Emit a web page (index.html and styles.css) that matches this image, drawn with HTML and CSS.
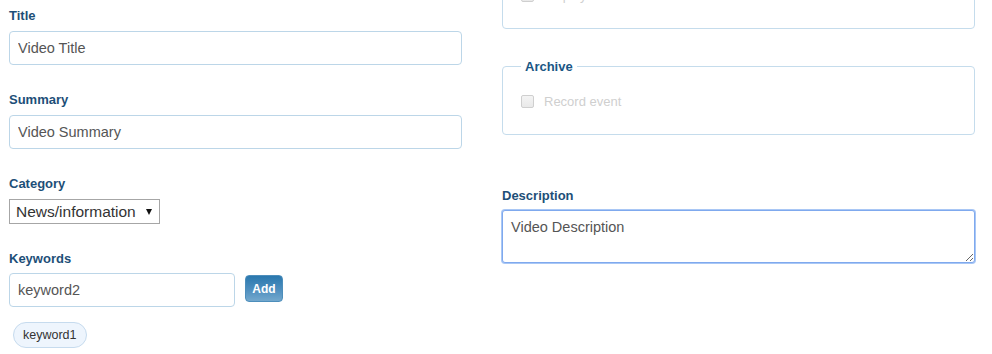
FILE: index.html
```html
<!DOCTYPE html>
<html>
<head>
<meta charset="utf-8">
<link rel="stylesheet" href="styles.css">
</head>
<body>
<div class="page">
  <div class="col col-left">
    <div class="group">
      <label class="lbl">Title</label>
      <input class="field" type="text" value="Video Title">
    </div>
    <div class="group">
      <label class="lbl">Summary</label>
      <input class="field" type="text" value="Video Summary">
    </div>
    <div class="group">
      <label class="lbl">Category</label>
      <div class="select-wrap">
        <select class="select"><option>News/information</option></select>
      </div>
    </div>
    <div class="group">
      <label class="lbl">Keywords</label>
      <div class="kw-row">
        <input class="field kw-field" type="text" value="keyword2">
        <button class="btn-add" type="button">Add</button>
      </div>
      <div class="tags">
        <span class="tag">keyword1</span>
      </div>
    </div>
  </div>
  <div class="col col-right">
    <fieldset class="fs">
      <legend class="legend">Live</legend>
      <div class="check-row">
        <input type="checkbox" class="chk" disabled>
        <span class="check-text">Display chat</span>
      </div>
    </fieldset>
    <fieldset class="fs fs-archive">
      <legend class="legend">Archive</legend>
      <div class="check-row">
        <input type="checkbox" class="chk" disabled>
        <span class="check-text">Record event</span>
      </div>
    </fieldset>
    <div class="group desc-group">
      <label class="lbl">Description</label>
      <textarea class="area focused" autofocus>Video Description</textarea>
    </div>
  </div>
</div>
</body>
</html>
```

FILE: styles.css
```css
html, body {
  margin: 0;
  padding: 0;
  background: #ffffff;
}
body {
  font-family: "Liberation Sans", Arial, sans-serif;
  color: #333;
  overflow: hidden;
}
.page {
  display: grid;
  grid-template-columns: 453px 473px;
  column-gap: 40px;
  padding-left: 9px;
  align-items: start;
}
.col {
  display: flex;
  flex-direction: column;
}
.col-left {
  padding-top: 8px;
}
.group {
  display: flex;
  flex-direction: column;
  align-items: flex-start;
  margin-bottom: 27px;
}
.lbl {
  display: block;
  font-size: 13px;
  line-height: 15px;
  font-weight: bold;
  color: #1d4f78;
  margin-bottom: 8px;
}
.field {
  box-sizing: border-box;
  width: 453px;
  height: 34px;
  border: 1px solid #bcd6e8;
  border-radius: 4px;
  padding: 0 8px;
  font-family: "Liberation Sans", Arial, sans-serif;
  font-size: 14.5px;
  color: #555;
  background: #fff;
  outline: none;
  margin: 0;
}
.select-wrap {
  position: relative;
  width: 151px;
  height: 25px;
}
.select-wrap::after {
  content: "";
  position: absolute;
  right: 8px;
  top: 10px;
  width: 0;
  height: 0;
  border-left: 3px solid transparent;
  border-right: 3px solid transparent;
  border-top: 6px solid #111;
  pointer-events: none;
}
.select {
  -webkit-appearance: none;
  appearance: none;
  box-sizing: border-box;
  width: 151px;
  height: 25px;
  border: 1px solid #a6a6a6;
  border-radius: 0;
  background: #fff;
  padding: 0 0 0 6px;
  margin: 0;
  font-family: "Liberation Sans", Arial, sans-serif;
  font-size: 15.5px;
  color: #333;
  outline: none;
}
.desc-group,
.group:last-child {
  margin-bottom: 0;
}
.kw-row {
  display: flex;
  align-items: flex-start;
  gap: 10px;
  margin-top: -1px;
}
.kw-field {
  width: 226px;
}
.btn-add {
  box-sizing: border-box;
  width: 38px;
  height: 27px;
  margin: 2px 0 0 0;
  padding: 0;
  border: 1px solid #4d8ebb;
  border-radius: 4px;
  background: linear-gradient(to bottom, #2a78ae 0%, #4f8fbf 55%, #73a8cd 100%);
  color: #fff;
  font-family: "Liberation Sans", Arial, sans-serif;
  font-weight: bold;
  font-size: 12px;
}
.tags {
  display: flex;
  margin-top: 15px;
  padding-left: 4px;
}
.tag {
  box-sizing: border-box;
  height: 26px;
  padding: 0 9px;
  border: 1px solid #c6dbee;
  border-radius: 13px;
  background: #eef5fd;
  color: #333;
  font-size: 12.5px;
  line-height: 24px;
}
.col-right {
  margin-top: -47px;
}
.fs {
  box-sizing: border-box;
  width: 473px;
  margin: 0 0 30px 0;
  padding: 19px 18px 25px 18px;
  border: 1px solid #c5dcec;
  border-radius: 4px;
}
.fs-archive {
  margin-bottom: 53px;
}
.legend {
  padding: 0 4px;
  font-size: 13px;
  line-height: 15px;
  font-weight: bold;
  color: #1a5685;
}
.check-row {
  display: flex;
  align-items: center;
  gap: 10px;
  height: 16px;
}
.chk {
  -webkit-appearance: none;
  appearance: none;
  box-sizing: border-box;
  width: 13px;
  height: 13px;
  margin: 0;
  border: 1px solid #cfcfcf;
  border-radius: 2px;
  background: linear-gradient(to bottom, #f4f4f4, #e9e9e9);
}
.check-text {
  font-size: 13px;
  line-height: 15px;
  color: #cfcfcf;
}
.desc-group .lbl {
  margin-bottom: 7px;
}
.area {
  box-sizing: border-box;
  width: 473px;
  height: 53px;
  border: 1px solid #bcd6e8;
  border-radius: 3px;
  padding: 6px 8px;
  font-family: "Liberation Sans", Arial, sans-serif;
  font-size: 14.5px;
  line-height: 20px;
  color: #555;
  resize: vertical;
  margin: 0;
  outline: none;
  caret-color: #222;
}
.area.focused {
  border: 1px solid #7fa9ee;
  box-shadow: 0 0 0 1px #a9c7f5;
}
```
